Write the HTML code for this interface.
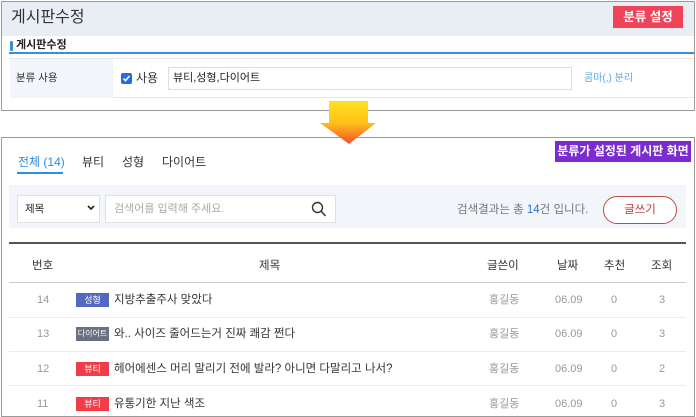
<!DOCTYPE html>
<html><head><meta charset="utf-8"><style>
*{margin:0;padding:0;box-sizing:border-box}
body{width:696px;height:414px;background:#fff;position:relative;overflow:hidden;font-family:"Liberation Sans","Noto Sans CJK KR",sans-serif;color:#333}
.a{position:absolute;white-space:nowrap;line-height:1.2}
.box{position:absolute;border:1px solid #9a9a9a}
.badge{position:absolute;left:76px;width:33px;height:14px;color:#fff;font-size:9px;line-height:14px;text-align:center}
.row{font-size:11px;color:#999;line-height:14px}
.t{font-size:11.5px;color:#333;line-height:14px}
.sep{position:absolute;left:9px;width:677px;height:1px;background:#ececec}
</style></head><body>
<!-- top box -->
<div class="box" style="left:1px;top:1px;width:694px;height:110px"></div>
<div class="a" style="left:2px;top:2px;width:692px;height:34px;background:#e9eef4"></div>
<div class="a" style="left:11px;top:8px;font-size:16px;color:#333">게시판수정</div>
<div class="a" style="left:613px;top:6px;width:70px;height:22px;background:#f0435a;color:#fff;font-size:12.5px;font-weight:bold;text-align:center;line-height:22px">분류 설정</div>
<div class="a" style="left:10px;top:41px;width:3px;height:10px;background:#3b8fd9;border-radius:1px"></div>
<div class="a" style="left:16px;top:38px;font-size:11px;font-weight:bold;color:#222;line-height:14px">게시판수정</div>
<div class="a" style="left:9px;top:52px;width:685px;height:2px;background:#3b8fd9"></div>
<div class="a" style="left:9px;top:58px;width:685px;height:1px;background:#e6e6e6"></div>
<div class="a" style="left:10px;top:59px;width:103px;height:39px;background:#f2f5f9"></div>
<div class="a" style="left:113px;top:97px;width:581px;height:1px;background:#e6e6e6"></div>
<div class="a" style="left:16px;top:72px;font-size:10.5px;color:#333;line-height:13px">분류 사용</div>
<div class="a" style="left:121px;top:73px;width:11px;height:11px;background:#1f6fe0;border-radius:2px"><svg width="11" height="11" viewBox="0 0 11 11" style="display:block"><path d="M2.5 5.6l2 2 4-4.6" fill="none" stroke="#fff" stroke-width="1.6"/></svg></div>
<div class="a" style="left:136px;top:71px;font-size:12px;color:#333;line-height:14px">사용</div>
<div class="a" style="left:168px;top:67px;width:404px;height:23px;border:1px solid #ddd;background:#fff"></div>
<div class="a" style="left:173px;top:72px;font-size:11px;color:#222;line-height:13px">뷰티,성형,다이어트</div>
<div class="a" style="left:584px;top:73px;font-size:10px;color:#5aa9e0;line-height:12px">콤마(,) 분리</div>
<!-- bottom box -->
<div class="box" style="left:1px;top:137px;width:694px;height:280px"></div>
<!-- arrow -->
<svg class="a" style="left:318px;top:100px" width="62" height="48" viewBox="318 100 62 48">
<defs><linearGradient id="g" x1="0" y1="0" x2="0" y2="1"><stop offset="0" stop-color="#ffe21a"/><stop offset="0.5" stop-color="#ffc21a"/><stop offset="1" stop-color="#f5502a"/></linearGradient></defs>
<path d="M329 101h39v22h8l-27 21-29-21h9z" fill="url(#g)"/></svg>
<div class="a" style="left:555px;top:141px;width:136px;height:21px;background:#7b2bd0;color:#fff;font-size:12px;font-weight:bold;line-height:21px;text-align:center">분류가 설정된 게시판 화면</div>
<div class="a" style="left:18px;top:155px;font-size:12px;color:#2f8ce0;line-height:14px">전체 (14)</div>
<div class="a" style="left:17px;top:172px;width:46px;height:2px;background:#2f8ce0"></div>
<div class="a" style="left:82px;top:155px;font-size:12px;color:#333;line-height:14px">뷰티</div>
<div class="a" style="left:122px;top:155px;font-size:12px;color:#333;line-height:14px">성형</div>
<div class="a" style="left:162px;top:155px;font-size:12px;color:#333;line-height:14px">다이어트</div>
<div class="a" style="left:9px;top:185px;width:677px;height:43px;background:#f2f5f9"></div>
<div class="a" style="left:17px;top:195px;width:83px;height:28px;background:#fff;border:1px solid #e0e0e0"></div>
<div class="a" style="left:25px;top:203px;font-size:10.5px;color:#222;line-height:13px">제목</div>
<svg class="a" style="left:87px;top:205px" width="8" height="6"><path d="M1 1l3 3 3-3" fill="none" stroke="#222" stroke-width="1.6"/></svg>
<div class="a" style="left:105px;top:195px;width:231px;height:28px;background:#fff;border:1px solid #e0e0e0"></div>
<div class="a" style="left:114px;top:203px;font-size:11px;color:#aaa;line-height:13px">검색어를 입력해 주세요.</div>
<svg class="a" style="left:311px;top:201px" width="16" height="17"><circle cx="6.5" cy="6.5" r="5" fill="none" stroke="#333" stroke-width="1.4"/><path d="M10 10l4.5 5" stroke="#333" stroke-width="1.5"/></svg>
<div class="a" style="left:457px;top:203px;font-size:11.5px;color:#777;line-height:14px">검색결과는 총 <span style="color:#2f6fd0">14</span>건 입니다.</div>
<div class="a" style="left:603px;top:196px;width:74px;height:28px;border:1px solid #c24a4a;border-radius:14px;background:#fff;color:#c23a3a;font-size:11.5px;text-align:center;line-height:26px">글쓰기</div>
<div class="a" style="left:9px;top:242px;width:677px;height:2px;background:#555"></div>
<div class="a t" style="left:32px;top:259px">번호</div>
<div class="a t" style="left:259px;top:259px">제목</div>
<div class="a t" style="left:487px;top:259px">글쓴이</div>
<div class="a t" style="left:557px;top:259px">날짜</div>
<div class="a t" style="left:604px;top:259px">추천</div>
<div class="a t" style="left:651px;top:259px">조회</div>
<div class="a" style="left:9px;top:282px;width:677px;height:1px;background:#ccc"></div>
<div class="sep" style="top:317px"></div>
<div class="sep" style="top:351px"></div>
<div class="sep" style="top:385px"></div>

<div class="a row" style="left:37px;top:293px">14</div>
<div class="badge" style="top:293px;background:#5468c0">성형</div>
<div class="a t" style="left:114px;top:293px">지방추출주사 맞았다</div>

<div class="a row" style="left:37px;top:327px">13</div>
<div class="badge" style="top:327px;background:#6d7080;font-size:8px">다이어트</div>
<div class="a t" style="left:114px;top:327px">와.. 사이즈 줄어드는거 진짜 쾌감 쩐다</div>

<div class="a row" style="left:37px;top:362px">12</div>
<div class="badge" style="top:362px;background:#ef3d4a">뷰티</div>
<div class="a t" style="left:114px;top:362px">헤어에센스 머리 말리기 전에 발라? 아니면 다말리고 나서?</div>

<div class="a row" style="left:37px;top:397px">11</div>
<div class="badge" style="top:397px;background:#ef3d4a">뷰티</div>
<div class="a t" style="left:114px;top:397px">유통기한 지난 색조</div>

<div class="a row" style="left:489px;top:293px">홍길동</div><div class="a row" style="left:555px;top:293px">06.09</div><div class="a row" style="left:611px;top:293px">0</div><div class="a row" style="left:659px;top:293px">3</div>
<div class="a row" style="left:489px;top:327px">홍길동</div><div class="a row" style="left:555px;top:327px">06.09</div><div class="a row" style="left:611px;top:327px">0</div><div class="a row" style="left:659px;top:327px">3</div>
<div class="a row" style="left:489px;top:362px">홍길동</div><div class="a row" style="left:555px;top:362px">06.09</div><div class="a row" style="left:611px;top:362px">0</div><div class="a row" style="left:659px;top:362px">2</div>
<div class="a row" style="left:489px;top:397px">홍길동</div><div class="a row" style="left:555px;top:397px">06.09</div><div class="a row" style="left:611px;top:397px">0</div><div class="a row" style="left:659px;top:397px">3</div>
</body></html>
